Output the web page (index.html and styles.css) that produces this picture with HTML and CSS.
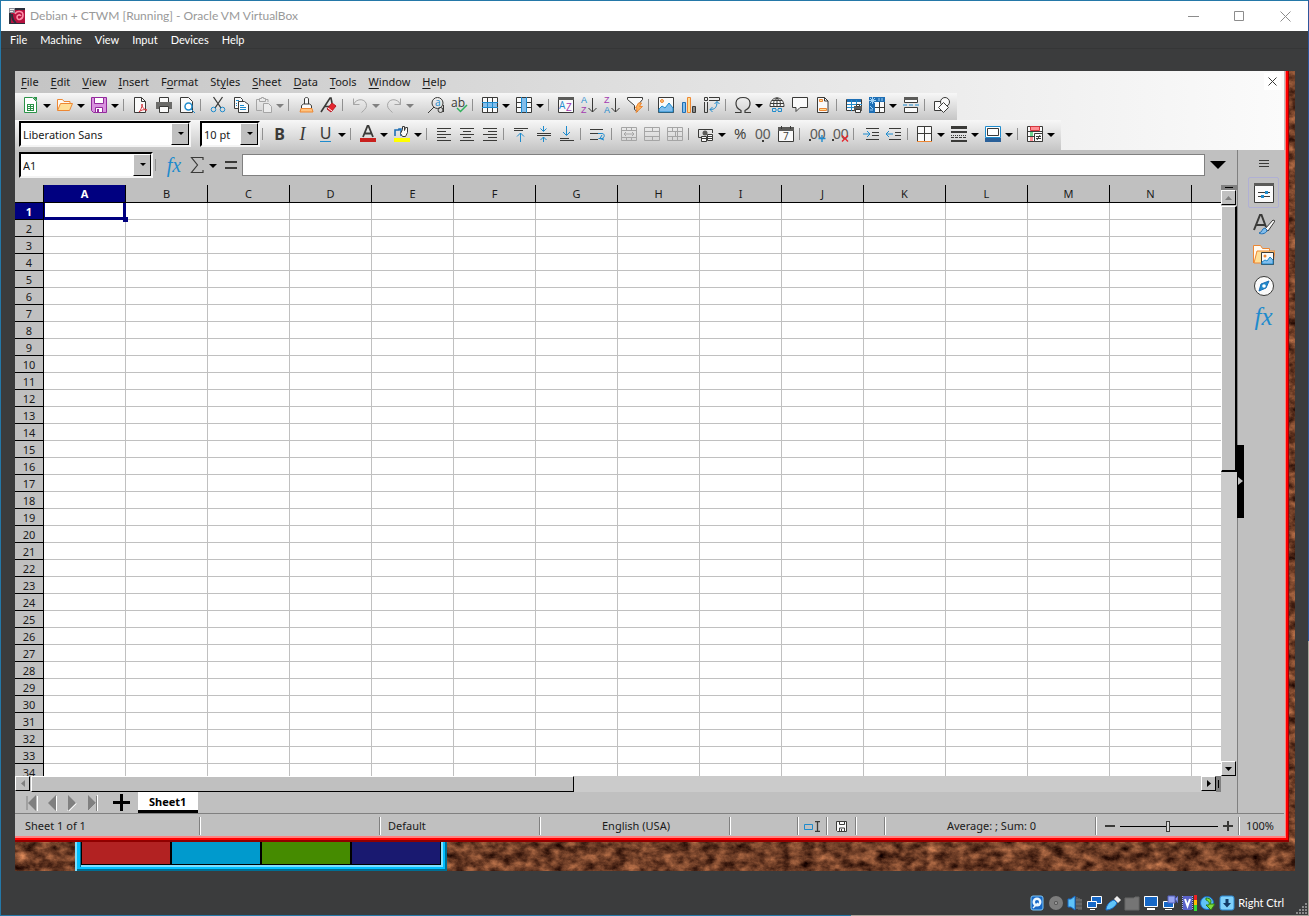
FILE: index.html
```
<!DOCTYPE html>
<html lang="en">
<head>
    <meta charset="UTF-8" />
    <meta name="viewport" content="width=device-width, initial-scale=1.0" />
    <title>Debian + CTWM [Running] - Oracle VM VirtualBox</title>
    <link rel="stylesheet" href="styles.css">
</head>
<body>
<div class="vm">
    <header class="titlebar">
        <svg class="icon" viewBox="0 0 16 16">
            <rect width="16" height="16" fill="#2b2f3b"/>
            <rect x="2" y="2" width="14" height="13" fill="#b5123f"/>
            <path d="M6 6c2-4 8-3 8 1c0 5-6 6-6 2c0-2 3-3 4-1" fill="none" stroke="#ff8fa8" stroke-width="1.600"/>
            <path d="M3 6c0 4 1 7 4 9" fill="none" stroke="#2b2f3b" stroke-width="2"/>
            <path d="M0 0h6v5H0z" fill="#8b8f99"/><path d="M1 1.500h4M1 3.500h3" stroke="#eee"/>
        </svg>
        <span class="title">Debian + CTWM [Running] - Oracle VM VirtualBox</span>
        <div class="window-buttons">
            <button aria-label="Minimize"><svg viewBox="0 0 11 11"><path d="M0 5.500h11"/></svg></button>
            <button aria-label="Maximize"><svg viewBox="0 0 11 11"><path d="M.5 .5h9v9h-9z"/></svg></button>
            <button aria-label="Close"><svg viewBox="0 0 11 11"><path d="M.5 .5l10 10M10.500 .5l-10 10"/></svg></button>
        </div>
    </header>
    <nav class="vm-menu">
        <button>File</button><button>Machine</button><button>View</button><button>Input</button><button>Devices</button><button>Help</button>
    </nav>

    <main class="guest">
        <svg class="wallpaper" aria-hidden="true">
            <filter id="bark" x="0" y="0" width="100%" height="100%" color-interpolation-filters="sRGB">
                <feTurbulence type="fractalNoise" baseFrequency=".08 .11" numOctaves="5" seed="6"/>
                <feColorMatrix values=".9 0 0 0 -.02  .62 0 0 0 -.07  .42 0 0 0 -.06  0 0 0 0 1"/>
            </filter>
            <rect width="100%" height="100%" filter="url(#bark)"/>
        </svg>

        <section class="office">
            <div class="office-top">
                <div class="menubar">
                    <button><u>F</u>ile</button><button><u>E</u>dit</button><button><u>V</u>iew</button><button><u>I</u>nsert</button><button>F<u>o</u>rmat</button><button>St<u>y</u>les</button><button><u>S</u>heet</button><button><u>D</u>ata</button><button><u>T</u>ools</button><button><u>W</u>indow</button><button><u>H</u>elp</button>
                    <button class="close-doc" aria-label="Close document"><svg viewBox="0 0 9 9"><path class="k" d="M.5 .5l8 8M8.500 .5l-8 8"/></svg></button>
                </div>

                <div class="toolbar standard">
                    <button class="tool" aria-label="New"><svg class="icon" viewBox="0 0 16 16"><path d="M1.500 .5h8l4 4v11h-12z" fill="#fff" stroke="#2b9348"/><path d="M10 0h4v4z" fill="#2b9348"/><path d="M4 7.500h7M4 9.500h7M4 11.500h7M4 13.500h7M4.500 7v7M7.500 7v7M10.500 7v7" stroke="#2b9348" fill="none"/></svg></button>
                    <button class="drop" aria-label="New options"></button>
                    <button class="tool" aria-label="Open"><svg class="icon" viewBox="0 0 16 16"><path d="M.5 13V2.500h5l1.500 2h6v3" fill="#fffaf0" stroke="#ed8733"/><path d="M.5 13.500l3-7h12l-3 7z" fill="#ffdf97" stroke="#ed8733"/></svg></button>
                    <button class="drop" aria-label="Open recent"></button>
                    <button class="tool" aria-label="Save"><svg class="icon" viewBox="0 0 16 16"><path d="M.5 .5h15v15h-13l-2-2z" fill="#d992df" stroke="#932a9c"/><path d="M3.500 .5h9v6h-9z" fill="#fff" stroke="#932a9c"/><path d="M4.500 10.500h7v5h-7z" fill="#fff" stroke="#932a9c"/><path d="M6 12h2v3H6z" fill="#932a9c"/></svg></button>
                    <button class="drop" aria-label="Save options"></button>
                    <span class="sep"></span>
                    <button class="tool" aria-label="Export as PDF"><svg class="icon" viewBox="0 0 16 16"><path class="w" d="M1.500 .5h7l4 4v11h-11z"/><path class="k" d="M8.500 .5v4h4"/><path d="M6 15c2-2 3-5 3-8c0 3 2 6 5 6c-3-1-6 0-8 2z" fill="#fff" stroke="#d7373f"/></svg></button>
                    <button class="tool" aria-label="Print"><svg class="icon" viewBox="0 0 16 16"><path class="w" d="M3.500 5V.5h9V5"/><path d="M0 5h16v7H0z" fill="#6b6b69"/><path class="w" d="M3.500 9.500h9v6h-9z"/></svg></button>
                    <button class="tool" aria-label="Print preview"><svg class="icon" viewBox="0 0 16 16"><path class="w" d="M1.500 .5h8l4 4v11h-12z"/><circle cx="9.500" cy="9.500" r="3.500" fill="#fff" stroke="#1e8bcd" stroke-width="1.500"/><path class="b" d="M12 12l4 4"/></svg></button>
                    <span class="sep"></span>
                    <button class="tool" aria-label="Cut"><svg class="icon" viewBox="0 0 16 16"><path class="k" d="M3.500 0L11 11M12.500 0L5 11" stroke-width="1.300"/><circle class="b" cx="3.500" cy="12.500" r="2.300"/><circle class="b" cx="12.500" cy="12.500" r="2.300"/></svg></button>
                    <button class="tool" aria-label="Copy"><svg class="icon" viewBox="0 0 16 16"><path class="w" d="M1.500 .5h6l2 2v9h-8z"/><path class="w" d="M5.500 4.500h6l4 3v8h-10z"/><path class="b" d="M3 3.500h3M7 8.500h4M7 10.500h6M7 12.500h6M3 6.500h1M3 8.500h1"/></svg></button>
                    <button class="tool" aria-label="Paste" disabled><svg class="icon" viewBox="0 0 16 16"><path class="g" d="M6 13.500H.5v-11h3M9 2.500h3V5M3.500 4.500v-3h2v-1h2v1h2v3z"/><path d="M7.500 6.500h5l3 3v6h-8z" fill="#ececec" stroke="#a5a5a5"/></svg></button>
                    <button class="drop off" aria-label="Paste options" disabled></button>
                    <span class="sep"></span>
                    <button class="tool" aria-label="Clone formatting"><svg class="icon" viewBox="0 0 16 16"><path class="w" d="M6.500 7V2c0-2 4-2 4 0v5"/><path class="w" d="M3.500 11V8.500l2-1.500h6l2 1.500V11"/><path d="M3 11.500h11l1 3.500H2z" fill="#ffc27d" stroke="#ed8733"/></svg></button>
                    <button class="tool" aria-label="Clear formatting"><svg class="icon" viewBox="0 0 16 16"><path class="k" d="M0 15L9 1h1l1 5M4 9.500h5" stroke-width="1.600"/><path d="M6 12l5-6l4 3l-5 6z" fill="#e5262f" stroke="#b91922"/><path d="M7 11l4 3" stroke="#fff"/></svg></button>
                    <span class="sep"></span>
                    <button class="tool" aria-label="Undo" disabled><svg class="icon" viewBox="0 0 16 16"><path class="g" d="M1.500 1.500v6h6M1.500 7.500c3-7 13-6 13 1c0 3-3 5-5 7"/></svg></button>
                    <button class="drop off" aria-label="Undo list" disabled></button>
                    <button class="tool" aria-label="Redo" disabled><svg class="icon" viewBox="0 0 16 16"><path class="g" d="M14.500 1.500v6h-6M14.500 7.500c-3-7-13-6-13 1c0 3 3 5 5 7"/></svg></button>
                    <button class="drop off" aria-label="Redo list" disabled></button>
                    <span class="sep blank"></span>
                    <button class="tool" aria-label="Find and replace"><svg class="icon" viewBox="0 0 16 16"><circle class="k" cx="9.500" cy="6" r="5.500"/><path class="k" d="M6 10l-6 6M15.500 8v7"/><circle class="k" cx="12.500" cy="13" r="2.500"/><text x="7" y="9" font-size="10" fill="#1e8bcd">a</text></svg></button>
                    <button class="tool" aria-label="Spelling"><svg class="icon" viewBox="0 0 16 16"><text x="0" y="10" font-size="12" fill="#3a3a38">ab</text><path d="M6 11l3.500 3.500L16 8" fill="none" stroke="#30b15c" stroke-width="1.500"/></svg></button>
                    <span class="sep"></span>
                    <button class="tool" aria-label="Row"><svg class="icon" viewBox="0 0 16 16"><path class="w" d="M.5 .5h15v15H.5z"/><path d="M1 5h14v5H1z" fill="#83beec"/><path class="k" d="M5.500 1v4M10.500 1v4M5.500 11v5M10.500 11v5"/><path class="b" d="M0 5.500h16M0 10.500h16M5.500 6v4M10.500 6v4"/></svg></button>
                    <button class="drop" aria-label="Row options"></button>
                    <button class="tool" aria-label="Column"><svg class="icon" viewBox="0 0 16 16"><path class="w" d="M.5 .5h15v15H.5z"/><path d="M5 1h6v14H5z" fill="#83beec"/><path class="k" d="M1 5.500h4M1 10.500h4M11 5.500h4M11 10.500h4"/><path class="b" d="M5.500 0v16M10.500 0v16"/></svg></button>
                    <button class="drop" aria-label="Column options"></button>
                    <span class="sep"></span>
                    <button class="tool" aria-label="Sort"><svg class="icon" viewBox="0 0 16 16"><path class="w" d="M.5 .5h15v15H.5z"/><path d="M0 0h16v3H0z" fill="#5b5b59"/><text x="1" y="12" font-size="10" fill="#1e8bcd">A</text><text x="8" y="14" font-size="10" fill="#a33ab0">Z</text></svg></button>
                    <button class="tool" aria-label="Sort ascending"><svg class="icon" viewBox="0 0 16 16"><text class="mini" x="0" y="6" fill="#1e8bcd">A</text><text class="mini" x="0" y="16" fill="#a33ab0">Z</text><path class="k" d="M11.500 1v14M7.500 11l4 4l4-4"/></svg></button>
                    <button class="tool" aria-label="Sort descending"><svg class="icon" viewBox="0 0 16 16"><text class="mini" x="0" y="6" fill="#a33ab0">Z</text><text class="mini" x="0" y="16" fill="#1e8bcd">A</text><path class="k" d="M11.500 1v14M7.500 11l4 4l4-4"/></svg></button>
                    <button class="tool" aria-label="AutoFilter"><svg class="icon" viewBox="0 0 16 16"><path class="w" d="M.5 .5h15v2l-5 6v6l-3-2v-4l-7-6z"/><path d="M11.500 6h3l-2 3.500h3L9 15.500l1-4.500H8.500z" fill="#ffb45c" stroke="#ed8733"/></svg></button>
                    <span class="sep"></span>
                    <button class="tool" aria-label="Insert image"><svg class="icon" viewBox="0 0 16 16"><path class="w" d="M.5 .5h15v15H.5z"/><circle cx="4" cy="4" r="1.500" fill="#ffc27d" stroke="#ed8733"/><path d="M1 12l3-3l3 2l4-5l4 5v4H1z" fill="#83beec" stroke="#1e8bcd"/></svg></button>
                    <button class="tool" aria-label="Insert chart"><svg class="icon" viewBox="0 0 16 16"><path d="M1.500 5.500h3v10h-3z" fill="#83beec" stroke="#1e6fb5"/><path d="M6.500 .5h3v15h-3z" fill="#ffdf97" stroke="#ed8733"/><path d="M11.500 9.500h3v6h-3z" fill="#8a8a88" stroke="#3a3a38"/></svg></button>
                    <button class="tool" aria-label="Pivot table"><svg class="icon" viewBox="0 0 16 16"><path class="k" d="M.5 .5h3v3h-3zM5 .5h10.500v3H5M.5 5v10.500h3V5"/><path class="b" d="M6 12.500c5 0 7-2 7-8M10.500 7l2.500-2.500L15.500 7M8.500 10L6 12.500L8.500 15"/></svg></button>
                    <span class="sep"></span>
                    <button class="tool" aria-label="Special character"><svg class="icon" viewBox="0 0 16 16"><path class="k" d="M0 15.500h6v-2C-1 10 -1 .5 8 .5s9 9.500 2 13v2h6" stroke-width="1.200"/></svg></button>
                    <button class="drop" aria-label="Special characters"></button>
                    <button class="tool" aria-label="Hyperlink"><svg class="icon" viewBox="0 0 16 16"><path class="w" d="M1 9.500C1-2 15-2 15 9.500z"/><path class="k" d="M1 6.500h14M8 1v8M5 9.500c-1-4 0-7 3-8.500c3 1.500 4 4.500 3 8.500M3 3.500h10"/><path d="M7 11.500H3.500v3H7M9 11.500h3.500v3H9M6 13h4" class="b"/></svg></button>
                    <button class="tool" aria-label="Comment"><svg class="icon" viewBox="0 0 16 16"><path class="w" d="M.5 .5h15v10H8l-4 4v-4H.5z"/></svg></button>
                    <button class="tool" aria-label="Headers and footers"><svg class="icon" viewBox="0 0 16 16"><path class="w" d="M2.500 .5h7l3.500 3.500v11.500H2.500z"/><path class="k" d="M9.500 .5V4H13"/><path d="M4.500 2.500h3v2h-3zM4.500 11.500h7v2h-7z" fill="#ffdf97" stroke="#ed8733"/></svg></button>
                    <span class="sep"></span>
                    <button class="tool" aria-label="Print area"><svg class="icon" viewBox="0 0 16 16"><path class="w" d="M.5 2.500h15v11H.5z"/><path d="M1 2h14v3H1z" fill="#1e6fb5"/><path class="b" d="M1 7.500h15M1 10.500h15M5.500 3v11M10.500 3v11"/><path d="M8 9h8v5H8z" fill="#5b5b59"/><path class="w" d="M10.500 7.500h3v2h-3zM9.500 12.500h5v3h-5z"/></svg></button>
                    <button class="tool" aria-label="Freeze rows and columns"><svg class="icon" viewBox="0 0 16 16"><path class="w" d="M.5 .5h15v15H.5z"/><path d="M0 0h16v5H6v11H0z" fill="#1e6fb5"/><path class="k" d="M6 10.500h10M10.500 5v11"/><path d="M3.500 0v7M0 3.500h7M1 1l5 5M6 1L1 6M10 1v3M13 1v3M1 9l3 3M1 13h3" stroke="#9fd0f4"/></svg></button>
                    <button class="drop" aria-label="Freeze options"></button>
                    <button class="tool" aria-label="Split window"><svg class="icon" viewBox="0 0 16 16"><path class="w" d="M1.500 .5h13v5h-13zM1.500 10.500h13v5h-13z"/><path d="M1 0h14v3H1z" fill="#5b5b59"/><path class="b" d="M0 8h4M6 8h4M12 8h4"/></svg></button>
                    <span class="sep"></span>
                    <button class="tool" aria-label="Show draw functions"><svg class="icon" viewBox="0 0 16 16"><path class="w" d="M.5 4.500h9v9h-9z"/><circle class="w" cx="11" cy="5" r="4.500"/><path class="w" d="M9.500 5.500l5 5l-5 5l-5-5z"/></svg></button>
                </div>

                <div class="toolbar formatting">
                    <div class="combo font-name"><select aria-label="Font name"><option>Liberation Sans</option><option>Liberation Serif</option></select></div>
                    <div class="combo font-size"><select aria-label="Font size"><option>10 pt</option><option>12 pt</option></select></div>
                    <span class="sep"></span>
                    <button class="tool letter bold" aria-label="Bold">B</button>
                    <button class="tool letter italic" aria-label="Italic">I</button>
                    <button class="tool letter underline" aria-label="Underline"><span>U</span></button>
                    <button class="drop" aria-label="Underline style"></button>
                    <span class="sep"></span>
                    <button class="tool" aria-label="Font color"><svg class="icon" viewBox="0 0 16 16"><path class="k" d="M3 11L7.500 0h1L13 11M4.500 7.500h7" stroke-width="1.800"/><path d="M0 12h16v4H0z" fill="#c9211e"/></svg></button>
                    <button class="drop" aria-label="Font color list"></button>
                    <button class="tool" aria-label="Highlighting"><svg class="icon" viewBox="0 0 16 16"><path d="M1 10V4h4V3h2v7" fill="none" stroke="#1e6fb5" stroke-width="1.600"/><path class="w" d="M6.500 7.500l2-4V.5h2v4l1-3h2v5l-2 4h-3z"/><path d="M0 12h16v4H0z" fill="#ff0"/></svg></button>
                    <button class="drop" aria-label="Highlighting list"></button>
                    <span class="sep"></span>
                    <button class="tool" aria-label="Align left"><svg class="icon" viewBox="0 0 16 16"><path class="k" d="M1 2.500h14M1 5.500h9M1 8.500h14M1 11.500h9M1 14.500h14"/></svg></button>
                    <button class="tool" aria-label="Center horizontally"><svg class="icon" viewBox="0 0 16 16"><path class="k" d="M1 2.500h14M4 5.500h8M1 8.500h14M4 11.500h8M1 14.500h14"/></svg></button>
                    <button class="tool" aria-label="Align right"><svg class="icon" viewBox="0 0 16 16"><path class="k" d="M1 2.500h14M6 5.500h9M1 8.500h14M6 11.500h9M1 14.500h14"/></svg></button>
                    <span class="sep"></span>
                    <button class="tool" aria-label="Align top"><svg class="icon" viewBox="0 0 16 16"><path class="k" d="M1 2.500h14M1 4.500h9"/><path class="b" d="M7.500 7v9M4 10.500L7.500 7L11 10.500"/></svg></button>
                    <button class="tool" aria-label="Center vertically"><svg class="icon" viewBox="0 0 16 16"><path class="k" d="M1 7.500h14M1 9.500h14"/><path class="b" d="M7.500 0v5M4.500 2.500l3 3l3-3M7.500 16v-5M4.500 14l3-3l3 3"/></svg></button>
                    <button class="tool" aria-label="Align bottom"><svg class="icon" viewBox="0 0 16 16"><path class="k" d="M1 12.500h9M1 14.500h14"/><path class="b" d="M7.500 0v9M4 6l3.500 3.500L11 6"/></svg></button>
                    <span class="sep"></span>
                    <button class="tool" aria-label="Wrap text"><svg class="icon" viewBox="0 0 16 16"><path class="k" d="M0 3.500h13M0 7.500h8M0 13.500h8"/><path class="b" d="M8 7.500h4c3 0 3 4 0 5M8.500 12.500h5M12 9l-2 3.500l4 1.500"/></svg></button>
                    <span class="sep"></span>
                    <button class="tool" aria-label="Merge and center" disabled><svg class="icon" viewBox="0 0 16 16"><path class="g" d="M.5 1.500h15v13H.5zM0 4.500h16M0 11.500h16M5.500 1v3M10.500 1v3M5.500 12v3M10.500 12v3M3 8h10M5 6l-2 2l2 2M11 6l2 2l-2 2"/></svg></button>
                    <button class="tool" aria-label="Merge cells" disabled><svg class="icon" viewBox="0 0 16 16"><path class="g" d="M.5 1.500h15v13H.5zM0 5.500h16M0 10.500h16M8.500 1v4M8.500 11v3"/></svg></button>
                    <button class="tool" aria-label="Split cells" disabled><svg class="icon" viewBox="0 0 16 16"><path class="g" d="M.5 1.500h15v13H.5zM0 5.500h16M0 10.500h16M5.500 1v4M10.500 1v13M5.500 10v5M8.500 5v5"/></svg></button>
                    <span class="sep"></span>
                    <button class="tool" aria-label="Currency"><svg class="icon" viewBox="0 0 16 16"><path class="k" d="M4 11.500H.5v-8h14V7"/><circle cx="7" cy="7" r="2.500" fill="#5b5b59"/><path class="w" d="M3.500 10.500h5v5h-5zM9.500 8.500h5v6h-5z"/><path class="k" d="M3 12.500h6M9 10.500h6M9 12.500h6"/></svg></button>
                    <button class="drop" aria-label="Currency list"></button>
                    <button class="tool" aria-label="Percent"><svg class="icon" viewBox="0 0 16 16"><text x="2" y="13" font-size="15" fill="#3a3a38">%</text></svg></button>
                    <button class="tool" aria-label="Number"><svg class="icon" viewBox="0 0 16 16"><text x="0" y="13" class="thin">00</text><path d="M7 14h2v2H7z" fill="#3a3a38"/></svg></button>
                    <button class="tool" aria-label="Date"><svg class="icon" viewBox="0 0 16 16"><path class="w" d="M.5 1.500h15v14H.5z"/><path d="M0 1h16v4H0z" fill="#5b5b59"/><path class="k" d="M3.500 0v3M12.500 0v3"/><text x="5" y="14" font-size="10" fill="#3a3a38">7</text></svg></button>
                    <span class="sep"></span>
                    <button class="tool" aria-label="Add decimal place"><svg class="icon" viewBox="0 0 16 16"><path d="M0 13h2v2H0z" fill="#3a3a38"/><text x="1" y="13" class="thin">00</text><path class="b" d="M13 9v7M9.500 12.500h7" stroke-width="1.400"/></svg></button>
                    <button class="tool" aria-label="Delete decimal place"><svg class="icon" viewBox="0 0 16 16"><path d="M0 13h2v2H0z" fill="#3a3a38"/><text x="1" y="13" class="thin">00</text><path d="M10 9.500l6 6M16 9.500l-6 6" stroke="#e5262f" stroke-width="1.400"/></svg></button>
                    <span class="sep"></span>
                    <button class="tool" aria-label="Increase indent"><svg class="icon" viewBox="0 0 16 16"><path class="k" d="M3 2.500h13M9 6.500h7M9 9.500h7M3 13.500h13"/><path class="b" d="M0 8h7M4 5l3 3l-3 3"/></svg></button>
                    <button class="tool" aria-label="Decrease indent"><svg class="icon" viewBox="0 0 16 16"><path class="k" d="M3 2.500h12M9 6.500h6M9 9.500h6M3 13.500h12"/><path class="b" d="M0 8h7M3 5L0 8l3 3"/></svg></button>
                    <span class="sep"></span>
                    <button class="tool" aria-label="Borders"><svg class="icon" viewBox="0 0 16 16"><path class="w" d="M.5 .5h14v15H.5z"/><path class="k" d="M0 7.500h15M7.500 0v15"/><path d="M0 15.500h15" stroke="#ed8733"/></svg></button>
                    <button class="drop" aria-label="Borders list"></button>
                    <button class="tool" aria-label="Border style"><svg class="icon" viewBox="0 0 16 16"><path d="M0 0h16v3H0zM0 5h16v2H0zM0 14h16v2H0z" fill="#3a3a38"/><path class="k" d="M0 9.500h16" stroke-dasharray="1 1"/><path class="k" d="M0 11.500h16" stroke-dasharray="3 1"/></svg></button>
                    <button class="drop" aria-label="Border styles"></button>
                    <button class="tool" aria-label="Border color"><svg class="icon" viewBox="0 0 16 16"><path d="M.5 .5h15v11H.5z" fill="#fff" stroke="#1e8bcd"/><path class="k" d="M2.500 2.500h11v7h-11z"/><path d="M0 12h16v4H0z" fill="#2a6099"/></svg></button>
                    <button class="drop" aria-label="Border colors"></button>
                    <span class="sep"></span>
                    <button class="tool" aria-label="Conditional"><svg class="icon" viewBox="0 0 16 16"><path class="w" d="M.5 .5h15v15H.5z"/><path class="k" d="M0 5.500h16M0 10.500h8M5.500 0v16"/><path d="M3.500 .5h9v4h-9z" fill="#ff8f94" stroke="#d7373f"/><path d="M3 6h3v4H3z" fill="#6fd28f"/><path d="M3 11h3v4H3z" fill="#ff8f94"/><path class="w" d="M7.500 7.500h8v8h-8z"/><path class="k" d="M9 10.500h5M9 12.500h5M13 9l-3 5"/></svg></button>
                    <button class="drop" aria-label="Conditional formatting"></button>
                </div>
            </div>

            <div class="office-body">
                <div class="calc">
                    <div class="formula-bar">
                        <div class="combo name-box"><input type="text" aria-label="Name box" value="A1" /></div>
                        <span class="sep"></span>
                        <button class="fx" aria-label="Function wizard">fx</button>
                        <button class="tool" aria-label="Select function"><svg class="icon" viewBox="0 0 16 16"><path class="k" d="M14 3V.5H2.500l6 7.500l-6 7.500H14V13" stroke-width="1.200"/></svg></button>
                        <button class="drop" aria-label="Functions"></button>
                        <button class="tool" aria-label="Formula"><svg class="icon" viewBox="0 0 16 16"><path d="M2 4h12v2H2zM2 10h12v2H2z" fill="#3a3a38"/></svg></button>
                        <input class="formula-input" type="text" aria-label="Input line" />
                        <button class="expand" aria-label="Expand formula bar"></button>
                    </div>
                    <div class="sheet-area">
                        <div class="sheet">
                            <table>
                                <thead><tr id="columns"></tr></thead>
                                <tbody id="rows"></tbody>
                            </table>
                        </div>
                        <div class="scroll vertical">
                            <span class="grip"></span>
                            <button class="step" aria-label="Scroll up"><svg viewBox="0 0 7 4"><path d="M0 4L3.500 0L7 4z" fill="#808080"/></svg></button>
                            <span class="thumb"></span>
                            <span class="track"></span>
                            <button class="step" aria-label="Scroll down"><svg viewBox="0 0 7 4"><path d="M0 0h7L3.500 4z"/></svg></button>
                        </div>
                    </div>
                    <div class="scroll horizontal">
                        <button class="step" aria-label="Scroll left"><svg viewBox="0 0 4 7"><path d="M4 0L0 3.500L4 7z" fill="#808080"/></svg></button>
                        <span class="thumb"></span>
                        <span class="track"></span>
                        <button class="step" aria-label="Scroll right"><svg viewBox="0 0 4 7"><path d="M0 0l4 3.500L0 7z"/></svg></button>
                        <span class="grip"></span>
                    </div>
                    <div class="tabs">
                        <button class="nav" aria-label="First sheet"><svg viewBox="0 0 12 16"><path d="M11.500 1v15" stroke="#fff"/><path d="M1 1v14" stroke="#808080"/><path d="M10 0v16L2 8z" fill="#808080"/></svg></button>
                        <button class="nav" aria-label="Previous sheet"><svg viewBox="0 0 12 16"><path d="M10.500 1v15" stroke="#fff"/><path d="M10 0v16L2 8z" fill="#808080"/></svg></button>
                        <button class="nav" aria-label="Next sheet"><svg viewBox="0 0 12 16"><path d="M2 16l8-8" stroke="#fff" stroke-width="2"/><path d="M2 0v16l8-8z" fill="#808080"/></svg></button>
                        <button class="nav" aria-label="Last sheet"><svg viewBox="0 0 12 16"><path d="M2 16l8-8M11.500 0v16" stroke="#fff"/><path d="M2 0v16l8-8z" fill="#808080"/><path d="M10.500 1v15" stroke="#808080"/></svg></button>
                        <button class="add" aria-label="Add sheet"><svg viewBox="0 0 17 17"><path d="M7 0h3v7h7v3h-7v7H7v-7H0V7h7z"/></svg></button>
                        <button class="tab">Sheet1</button>
                    </div>
                </div>
                <aside class="sidebar">
                    <button class="panel-toggle" aria-label="Hide sidebar"><svg viewBox="0 0 5 8"><path d="M0 0l5 4l-5 4z" fill="#c0c0c0"/></svg></button>
                    <button class="burger" aria-label="Sidebar settings"><svg viewBox="0 0 10 8"><path class="k" d="M0 .5h10M0 3.500h10M0 6.500h10"/></svg></button>
                    <button class="deck active" aria-label="Properties"><svg viewBox="0 0 22 22"><path class="w" d="M1.500 1.500h19v19h-19z"/><path d="M1 1h20v3H1z" fill="#5b5b59"/><path class="k" d="M5 10.500h12M5 14.500h12"/><path d="M12 9h3v3h-3zM8 13h3v3H8z" fill="#1e8bcd"/></svg></button>
                    <button class="deck" aria-label="Styles"><svg viewBox="0 0 22 22"><path class="k" d="M1 17L7 2h1.500L13 14M3.500 12H12" stroke-width="2"/><path d="M12 16l8-9l2 1l-7 10z" class="w"/><path d="M6 20c3 0 3-5 6-5l2 2c0 3-5 5-8 3z" fill="#83beec" stroke="#1e6fb5"/></svg></button>
                    <button class="deck" aria-label="Gallery"><svg viewBox="0 0 22 22"><path d="M.5 19V1.500h7l2 3h7V7" fill="#fffaf0" stroke="#ed8733"/><path d="M1 19L4 7h18l-2 12z" fill="#ffdf97" stroke="#ed8733"/><path class="w" d="M8.500 8.500h12v12h-12z"/><circle cx="12" cy="12" r="1.500" fill="#ed8733"/><path d="M9 18l3-2l2 1l3-4l3 3v4H9z" fill="#83beec" stroke="#1e8bcd"/></svg></button>
                    <button class="deck" aria-label="Navigator"><svg viewBox="0 0 22 22"><circle class="w" cx="11" cy="11" r="9.500"/><path d="M16 6l-3 7l-7 3l2-7z" fill="#1e8bcd" stroke="#1e6fb5"/><circle cx="11" cy="11" r="1.800" fill="#fff"/></svg></button>
                    <button class="deck fx" aria-label="Functions">fx</button>
                </aside>
            </div>

            <footer class="statusbar">
                <span class="cell sheet-count">Sheet 1 of 1</span>
                <span class="cell empty"></span>
                <span class="cell style">Default</span>
                <span class="cell language">English (USA)</span>
                <span class="cell insert"></span>
                <span class="cell mode"><svg viewBox="0 0 16 11"><path class="b" d="M.5 3.500h8v5h-8z"/><path class="k" d="M11 .5h5M13.500 1v9M11 10.500h5" stroke-width="1.300"/></svg></span>
                <span class="cell mode"><svg viewBox="0 0 11 11"><path class="w" d="M.5 .5h10v10h-9l-1-1z"/><path class="k" d="M3.500 .5v3h5v-3M3.500 10v-3h5v3M5.500 8v2"/></svg></span>
                <span class="cell mode"></span>
                <span class="cell sum">Average: ; Sum: 0</span>
                <span class="cell zoom">
                    <button aria-label="Zoom out"><svg viewBox="0 0 10 10"><path d="M0 4h10v2H0z" fill="#3a3a38"/></svg></button>
                    <input type="range" aria-label="Zoom" min="0" max="100" value="49" />
                    <button aria-label="Zoom in"><svg viewBox="0 0 10 10"><path d="M4 0h2v4h4v2H6v4H4V6H0V4h4z" fill="#3a3a38"/></svg></button>
                </span>
                <span class="cell percent">100%</span>
            </footer>
        </section>

        <div class="workspaces">
            <button class="red" aria-label="Workspace 1"></button><button class="blue" aria-label="Workspace 2"></button><button class="green" aria-label="Workspace 3"></button><button class="navy" aria-label="Workspace 4"></button>
        </div>
    </main>

    <footer class="vm-status">
        <svg viewBox="0 0 16 16"><rect x="2" y="1" width="12" height="14" rx="2" fill="#1668c7" stroke="#7cc4f5"/><circle cx="8" cy="7" r="4.500" fill="#e8f6ff"/><circle cx="8" cy="7" r="2" fill="#1668c7"/><path d="M4 13l5-5" stroke="#e8f6ff" stroke-width="1.500"/></svg>
        <svg viewBox="0 0 16 16"><circle cx="8" cy="8" r="7" fill="#7d7d7d"/><circle cx="8" cy="8" r="2" fill="#555"/><circle cx="8" cy="8" r="1" fill="#aaa"/></svg>
        <svg viewBox="0 0 16 16"><path d="M1 4h3l4-3v14l-4-3H1z" fill="#5fc3f7" stroke="#1668c7"/><path d="M10 2v12M12 3v12M14 4v11M9 5h6M9 9h6M9 13h6" stroke="#777"/></svg>
        <svg viewBox="0 0 16 16"><path d="M5.500 1.500h10v7h-10z" fill="#1668c7" stroke="#fff"/><path d="M1.500 6.500h9v6h-9zM4 14.500h5" fill="#1668c7" stroke="#fff"/></svg>
        <svg viewBox="0 0 16 16"><path d="M1 15c0-5 4-9 8-10l3 3c-2 4-6 7-11 7z" fill="#5fc3f7" stroke="#1668c7"/><path d="M9 4l3-3l4 4l-3 3z" fill="#eee" stroke="#999"/></svg>
        <svg viewBox="0 0 16 16"><path d="M1 3h9l1-1h4v13H1z" fill="#757575" stroke="#666"/></svg>
        <svg viewBox="0 0 16 16"><path d="M1.500 1.500h13v10h-13z" fill="#1668c7" stroke="#fff"/><path d="M4 14h8" stroke="#fff" stroke-width="2"/></svg>
        <svg viewBox="0 0 16 16"><path d="M1.500 6.500h10v6h-10z" fill="#1668c7" stroke="#fff"/><path d="M3 14.500h7" stroke="#fff"/><path d="M6 1h7v7H6zM13 4l3-3v7z" fill="#98a4f0" stroke="#5560c0"/></svg>
        <svg viewBox="0 0 16 16"><path d="M2 1h9v14H2z" fill="#5a62c9"/><path d="M1.500 1v14M11.500 1v14" stroke="#aab0f0" stroke-dasharray="1 1"/><path d="M4 4l2.500 7L9 4" fill="none" stroke="#fff" stroke-width="2"/><path d="M13 0h3v5h-3z" fill="#e22"/><path d="M13 5h3v5h-3z" fill="#fb0"/><path d="M13 10h3v6h-3z" fill="#3d3"/></svg>
        <svg viewBox="0 0 16 16"><circle cx="7" cy="8" r="6.500" fill="#5fc3f7" stroke="#1668c7"/><path d="M6 3c5 0 6 3 4 6h5l-4 6l-5-5h3c1-3-1-4-3-5z" fill="#7ddc3c" stroke="#2a7a12"/></svg>
        <svg viewBox="0 0 16 16"><rect x="1" y="1" width="14" height="14" rx="2" fill="#7fd0fa" stroke="#2a86d0"/><path d="M6.500 4h3v4H12l-4 4.500L4 8h2.500z" fill="#123a66"/></svg>
        <span>Right Ctrl</span>
        <svg class="resize" viewBox="0 0 12 12"><path d="M9 1h2M9 4h2M9 7h2M9 10h2M6 4h2M6 7h2M6 10h2M3 7h2M3 10h2M0 10h2" stroke="#8a8a8a" stroke-width="2"/></svg>
    </footer>
</div>

<script>
    const letters = "ABCDEFGHIJKLMN".split("");
    const head = document.getElementById("columns");
    head.innerHTML = '<th class="corner"></th>' +
        letters.map((l, i) => `<th class="col${i === 0 ? " current" : ""}">${l}</th>`).join("") +
        '<th class="last"></th>';

    let html = "";
    for (let r = 1; r <= 34; r++) {
        html += `<tr><th class="${r === 1 ? "current" : ""}">${r}</th>`;
        for (let c = 0; c < letters.length; c++) {
            html += r === 1 && c === 0 ? '<td class="cursor"></td>' : "<td></td>";
        }
        html += '<td class="last"></td></tr>';
    }
    document.getElementById("rows").innerHTML = html;
</script>
</body>
</html>
```
FILE: styles.css
```
* {
    box-sizing: border-box;
}
body {
    margin: 0;
    font-family: "Noto Sans", "Open Sans", sans-serif;
    font-size: 11px;
    line-height: 16px;
    color: #1a1a1a;
}
button, input, select {
    font: inherit;
    color: inherit;
    margin: 0;
    padding: 0;
    border: 0;
    background: none;
    border-radius: 0;
}
svg {
    display: block;
    flex: none;
}
svg text {
    font-family: "Open Sans", sans-serif;
}
svg .thin {
    font-family: "Liberation Sans", sans-serif;
    font-size: 14px;
    fill: #5b5b59;
}
svg .mini {
    font-family: "Liberation Sans", sans-serif;
    font-size: 9px;
}
.icon {
    width: 16px;
    height: 16px;
    overflow: visible;
}
.k {
    stroke: #3a3a38;
    fill: none;
}
.w {
    stroke: #3a3a38;
    fill: #fafafa;
}
.b {
    stroke: #1e8bcd;
    fill: none;
}
.g {
    stroke: #a5a5a5;
    fill: none;
}

/* host window */
.vm {
    height: 100vh;
    display: flex;
    flex-direction: column;
    border: 1px solid transparent;
    background:
        linear-gradient(#3b3c3d, #3b3c3d) padding-box,
        linear-gradient(90deg, #2478a8 65%, #a9a39b 65%) bottom / 100% 1px no-repeat border-box,
        linear-gradient(#2f569b 70%, #a9a79c 70%) right / 1px 100% no-repeat border-box,
        linear-gradient(#2478a8, #2478a8) border-box;
}
.titlebar {
    flex: none;
    height: 30px;
    display: flex;
    align-items: center;
    padding-left: 8px;
    background: #fff;
    color: #999;
    font-family: Lato, "Open Sans", sans-serif;
    font-size: 12px;
}
.title {
    margin-left: 5px;
}
.window-buttons {
    margin-left: auto;
    display: flex;
}
.window-buttons button {
    width: 46px;
    height: 28px;
    display: flex;
    align-items: center;
    justify-content: center;
}
.window-buttons svg {
    width: 11px;
    height: 11px;
    stroke: #8c8c8c;
    fill: none;
}
.vm-menu {
    flex: none;
    height: 18px;
    display: flex;
    gap: 13px;
    padding-left: 9px;
    border-bottom: 1px solid #353637;
    color: #fff;
    font-family: Lato, "Open Sans", sans-serif;
}
.guest {
    position: relative;
    flex: 1;
    min-height: 0;
    margin: 22px 13px 19px 14px;
    display: flex;
    flex-direction: column;
}
.wallpaper {
    position: absolute;
    width: 100%;
    height: 100%;
}
.vm-status {
    flex: none;
    height: 25px;
    display: flex;
    align-items: center;
    justify-content: flex-end;
    gap: 3px;
    color: #fff;
    font-family: Lato, "Open Sans", sans-serif;
}
.vm-status svg {
    width: 16px;
    height: 16px;
}
.vm-status .resize {
    width: 12px;
    height: 12px;
    margin-left: 9px;
    align-self: flex-end;
}

/* office window */
.office {
    position: relative;
    flex: 1;
    min-height: 0;
    margin: 0 7px 2px 0;
    padding: 0 2px 2px 0;
    display: flex;
    flex-direction: column;
    background: #c0c0c0;
    border: solid #f00;
    border-width: 0 2px 2px 0;
    box-shadow: inset -1px 0 #ff8080, inset 0 -2px #ff8080, 1px 0 #a00000, 0 2px #900000, 1px 2px #900000;
}
.office-top {
    flex: none;
    background: linear-gradient(90deg, #c4c4c4, #fbfbfb);
}
.menubar {
    height: 22px;
    display: flex;
    align-items: center;
    gap: 12px;
    padding-left: 6px;
}
.menubar u {
    text-underline-offset: 2px;
}
.close-doc {
    margin: 0 3px 1px auto;
    width: 17px;
    height: 17px;
    background: #fff;
}
.close-doc svg {
    width: 9px;
    height: 9px;
    margin: auto;
}
.toolbar {
    width: max-content;
    display: flex;
    align-items: center;
    background: linear-gradient(#f7f7f7, #c6c6c6);
}
.standard {
    height: 27px;
    padding: 0 4px 3px 4px;
}
.formatting {
    height: 30px;
    padding: 0 4px 2px 4px;
}
.tool {
    width: 23px;
    height: 22px;
    display: flex;
    align-items: center;
    justify-content: center;
}
.drop {
    width: 11px;
    height: 22px;
    display: flex;
    align-items: center;
    justify-content: center;
}
.drop::before {
    content: "";
    margin: 2px 2px 0 0;
    border: solid transparent;
    border-width: 4px 4px 0;
    border-top-color: #000;
}
.drop.off::before {
    border-top-color: #808080;
}
.sep {
    width: 8px;
    height: 12px;
    flex: none;
    background: linear-gradient(#909090, #909090) 2px 0 / 1px 100% no-repeat;
}
.sep.blank {
    background: none;
}
.letter {
    color: #3a3a38;
    font-size: 16px;
    line-height: 20px;
}
.bold {
    font-weight: bold;
}
.italic {
    font-family: "Liberation Serif", serif;
    font-style: italic;
    font-size: 18px;
}
.underline span {
    line-height: 15px;
    border-bottom: 1px solid #1e8bcd;
}
.combo {
    position: relative;
    flex: none;
    height: 26px;
    background: #fff;
    border: 2px solid;
    border-color: #000 #f4f4f4 #f4f4f4 #000;
}
.combo select, .combo input {
    appearance: none;
    width: 100%;
    height: 22px;
    padding: 1px 20px 0 2px;
    outline: 0;
}
.combo::before {
    content: "";
    position: absolute;
    top: 0;
    right: 0;
    bottom: 0;
    width: 16px;
    background: #c0c0c0;
    border: 1px solid;
    border-color: #fff #000 #000 #fff;
    pointer-events: none;
}
.combo::after {
    content: "";
    position: absolute;
    top: 9px;
    right: 5px;
    border: solid transparent;
    border-width: 3px 3px 0;
    border-top-color: #000;
    pointer-events: none;
}
.font-name {
    width: 172px;
    margin-right: 9px;
}
.font-size {
    width: 60px;
}
.office-body {
    flex: 1;
    min-height: 0;
    display: flex;
    border-bottom: 1px solid #808080;
}
.calc {
    flex: 1;
    min-width: 0;
    display: flex;
    flex-direction: column;
}
.formula-bar {
    flex: none;
    height: 35px;
    display: flex;
    align-items: center;
    padding: 0 11px 6px 4px;
}
.name-box {
    width: 134px;
}
.fx {
    color: #1e8bcd;
    font-family: "Liberation Serif", serif;
    font-style: italic;
    font-size: 20px;
    line-height: 20px;
}
.formula-bar .fx {
    width: 22px;
    margin-left: 2px;
}
.formula-input {
    flex: 1;
    min-width: 0;
    height: 22px;
    padding: 0 4px;
    background: #fff;
    border: 1px solid #808080;
}
.expand {
    width: 16px;
    height: 8px;
    margin-left: 5px;
    border: solid transparent;
    border-width: 8px 8px 0;
    border-top-color: #000;
}
.sheet-area {
    flex: 1;
    min-height: 0;
    display: flex;
}
.sheet {
    flex: 1;
    min-width: 0;
    overflow: hidden;
    background: #fff;
}
table {
    width: 100%;
    table-layout: fixed;
    border-collapse: separate;
    border-spacing: 0;
}
th {
    height: 17px;
    padding: 2px 0 0;
    background: #c0c0c0;
    border: solid #000;
    border-width: 0 1px 1px 0;
    font-weight: normal;
    line-height: 14px;
}
thead th {
    height: 18px;
    padding: 1px 0 0;
    line-height: 16px;
}
th.corner {
    width: 29px;
}
th.col {
    width: 82px;
}
th.current {
    background: #000080;
    color: #fff;
    font-weight: bold;
}
td {
    height: 17px;
    padding: 0;
    border: solid #c0c0c0;
    border-width: 0 1px 1px 0;
}
.last {
    border-right: 0;
}
.cursor {
    position: relative;
    border: solid #000080;
    border-width: 0 3px 3px 1px;
}
.cursor::after {
    content: "";
    position: absolute;
    right: -5px;
    bottom: -5px;
    width: 5px;
    height: 5px;
    background: #000080;
}
.scroll {
    flex: none;
    display: flex;
    background: #c0c0c0;
}
.vertical {
    width: 16px;
    flex-direction: column;
}
.horizontal {
    height: 16px;
    margin-right: 16px;
}
.step {
    flex: none;
    width: 15px;
    height: 15px;
    display: flex;
    align-items: center;
    justify-content: center;
    background: #c0c0c0;
    border: 1px solid;
    border-color: #fff #000 #000 #fff;
}
.vertical .step svg {
    width: 7px;
    height: 4px;
}
.horizontal .step svg {
    width: 4px;
    height: 7px;
}
.thumb {
    border: 1px solid;
    border-color: #fff #000 #000 #fff;
}
.track {
    flex: 1;
    background: #cbcbcb;
}
.vertical .thumb {
    flex: 0 0 45%;
    margin-top: 1px;
    border-width: 1px 2px 2px 1px;
}
.horizontal .thumb {
    flex: 0 0 45%;
    margin-left: 1px;
}
.grip {
    flex: none;
    background: linear-gradient(#000, #000) center / 8px 1px no-repeat #808080;
}
.vertical .grip {
    height: 5px;
}
.horizontal .grip {
    width: 5px;
    background-size: 1px 8px;
}
.tabs {
    flex: none;
    height: 21px;
    display: flex;
    align-items: center;
    padding-left: 11px;
}
.nav {
    width: 20px;
}
.nav svg {
    width: 12px;
    height: 16px;
}
.add {
    margin: 0 8px 0 7px;
}
.add svg {
    width: 17px;
    height: 17px;
}
.tab {
    height: 21px;
    padding: 1px 12px 0 11px;
    background: #fff;
    border-bottom: 3px solid #000;
    font-weight: bold;
    color: #000;
}

/* sidebar */
.sidebar {
    position: relative;
    flex: none;
    width: 47px;
    display: flex;
    flex-direction: column;
    padding-left: 10px;
    border-left: 1px solid #808080;
}
.burger {
    width: 31px;
    height: 27px;
    display: flex;
    align-items: center;
    justify-content: center;
}
.burger svg {
    width: 10px;
    height: 8px;
}
.deck {
    width: 31px;
    height: 31px;
    display: flex;
    align-items: center;
    justify-content: center;
    border: 1px solid transparent;
    border-radius: 2px;
}
.deck svg {
    width: 22px;
    height: 22px;
}
.deck.active {
    border-color: #b0b0d4;
}
.deck.fx {
    font-size: 25px;
}
.panel-toggle {
    position: absolute;
    left: -1px;
    top: 50%;
    width: 7px;
    height: 73px;
    margin-top: -37px;
    background: #000;
}
.panel-toggle svg {
    width: 5px;
    height: 8px;
    margin-left: 1px;
}

.statusbar {
    flex: none;
    height: 22px;
    display: flex;
    align-items: center;
    padding-top: 2px;
}
.cell {
    height: 18px;
    line-height: 18px;
    display: flex;
    align-items: center;
    justify-content: center;
    border-right: 1px solid #808080;
    box-shadow: 1px 0 #fff;
}
.sheet-count {
    width: 185px;
    justify-content: flex-start;
    padding-left: 10px;
}
.empty {
    width: 180px;
}
.style {
    width: 160px;
    justify-content: flex-start;
    padding-left: 8px;
}
.language {
    width: 190px;
    padding-left: 3px;
}
.insert {
    width: 68px;
}
.mode {
    width: 29px;
}
.mode svg {
    height: 11px;
}
.sum {
    flex: 1;
    padding-left: 3px;
}
.zoom {
    width: 143px;
    gap: 5px;
    padding-left: 3px;
}
.zoom svg {
    width: 10px;
    height: 10px;
}
.zoom input {
    appearance: none;
    width: 98px;
    height: 11px;
    background: linear-gradient(#000, #000) center / 100% 1px no-repeat;
}
.zoom input::-webkit-slider-thumb {
    appearance: none;
    width: 4px;
    height: 11px;
    background: #d8d8d8;
    border: 1px solid #3a3a38;
}
.percent {
    width: 45px;
    padding-right: 3px;
    border: 0;
    box-shadow: none;
}

/* workspace manager peeking out under the office window */
.workspaces {
    position: relative;
    flex: none;
    width: 372px;
    height: 29px;
    margin-left: 60px;
    padding: 0 6px 6px;
    display: flex;
    background: #000;
    box-shadow: inset 2px 0 #7fdfff, inset -2px -2px #006f94, inset 5px 0 #00bfff, inset -4px -4px #00bfff, inset 6px 0 #006f94, inset -6px -6px #7fdfff;
}
.workspaces button {
    flex: 1;
    border: 1px solid #000;
    border-top: 0;
}
.red {
    background: #b22222;
}
.blue {
    background: #009acd;
}
.green {
    background: #458b00;
}
.navy {
    background: #191970;
}
```
